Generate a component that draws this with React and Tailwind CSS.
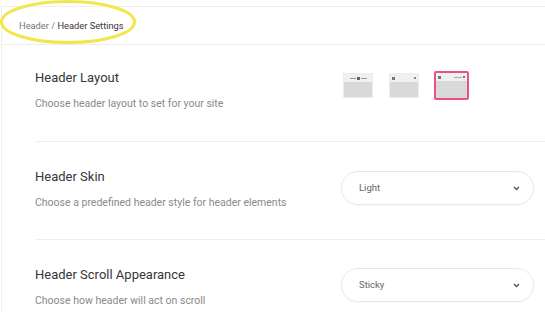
import React from 'react';

const LayoutThumb = ({ variant }) => (
    <div className="w-[30px] h-[25px] border border-[#ececec] bg-[#d9d9d9] flex flex-col">
        <div className="h-[8px] bg-[#eef0f2] flex items-center px-[2px] relative">
            {variant === 'center' && (
                <div className="flex-1 flex items-center justify-center gap-[1px]">
                    <div className="w-[6px] h-px bg-[#999]" />
                    <div className="w-[3px] h-[3px] bg-[#666]" />
                    <div className="w-[6px] h-px bg-[#999]" />
                </div>
            )}
            {variant === 'left' && (
                <div className="flex-1 flex items-center justify-between">
                    <div className="w-[3px] h-[3px] bg-[#777]" />
                    <div className="w-[2px] h-[2px] bg-[#888]" />
                </div>
            )}
        </div>
    </div>
);

const Select = ({ value }) => (
    <div className="w-[193px] h-[34px] rounded-full border border-[#e8e8e8] shadow-[0_1px_2px_rgba(0,0,0,0.03)] flex items-center justify-between pl-[17px] pr-[13px]">
        <span className="text-[9.5px] text-[#666]">{value}</span>
        <svg width="7" height="5" viewBox="0 0 7 5">
            <polyline points="1,1 3.5,3.5 6,1" fill="none" stroke="#555" strokeWidth="1.4" />
        </svg>
    </div>
);

const SettingRow = ({ title, desc, pt, h, border, children }) => (
    <div className={`flex items-start justify-between pr-[11px] ${h} ${pt} ${border ? 'border-b border-[#efefef]' : ''}`}>
        <div>
            <h3 className="text-[13px] leading-[16px] text-[#363636]">{title}</h3>
            <p className="mt-[11px] text-[10.5px] leading-[14px] text-[#8a8a8a]">{desc}</p>
        </div>
        {children}
    </div>
);

export default function App() {
    return (
        <div className="relative w-[545px] h-[312px] bg-white overflow-hidden font-['Roboto',sans-serif]">
            {/* Breadcrumb */}
            <div className="mt-[6px] h-[39px] border-y border-l border-[#efefef] ml-px flex items-center pl-[17px] text-[9.3px]">
                <span className="text-[#777]">Header /&nbsp;</span>
                <span className="text-[#3e3140]">Header Settings</span>
            </div>

            {/* Settings panel */}
            <div className="ml-px border-l border-[#efefef] pl-[33px]">
                <SettingRow title="Header Layout" desc="Choose header layout to set for your site" h="h-[97px]" pt="pt-[25px]" border>
                    <div className="w-[193px] flex items-center gap-[16px] mt-[1px] pl-[2px]">
                        <LayoutThumb variant="center" />
                        <LayoutThumb variant="left" />
                        <div className="border-2 border-[#e8537c] rounded-[2px] -ml-px">
                            <div className="w-[31px] h-[25px] bg-[#d9d9d9] flex flex-col">
                                <div className="h-[8px] bg-[#eef0f2] flex items-center justify-between px-[2px]">
                                    <div className="w-[3px] h-[3px] bg-[#777]" />
                                    <div className="flex items-center gap-[1px]">
                                        <div className="w-[8px] h-px bg-[#aaa]" />
                                        <div className="w-[2px] h-[2px] bg-[#777]" />
                                    </div>
                                </div>
                            </div>
                        </div>
                    </div>
                </SettingRow>

                <SettingRow title="Header Skin" desc="Choose a predefined header style for header elements" h="h-[98px]" pt="pt-[27px]" border>
                    <div className="mt-[2px]">
                        <Select value="Light" />
                    </div>
                </SettingRow>

                <SettingRow title="Header Scroll Appearance" desc="Choose how header will act on scroll" h="h-[80px]" pt="pt-[27px]">
                    <div className="mt-[1px]">
                        <Select value="Sticky" />
                    </div>
                </SettingRow>
            </div>

            {/* Highlight annotation */}
            <svg className="absolute left-0 top-0 pointer-events-none" width="145" height="48">
                <ellipse cx="68" cy="22" rx="66.5" ry="20.5" fill="none" stroke="#f2e74a" strokeWidth="3" />
            </svg>
        </div>
    );
}
